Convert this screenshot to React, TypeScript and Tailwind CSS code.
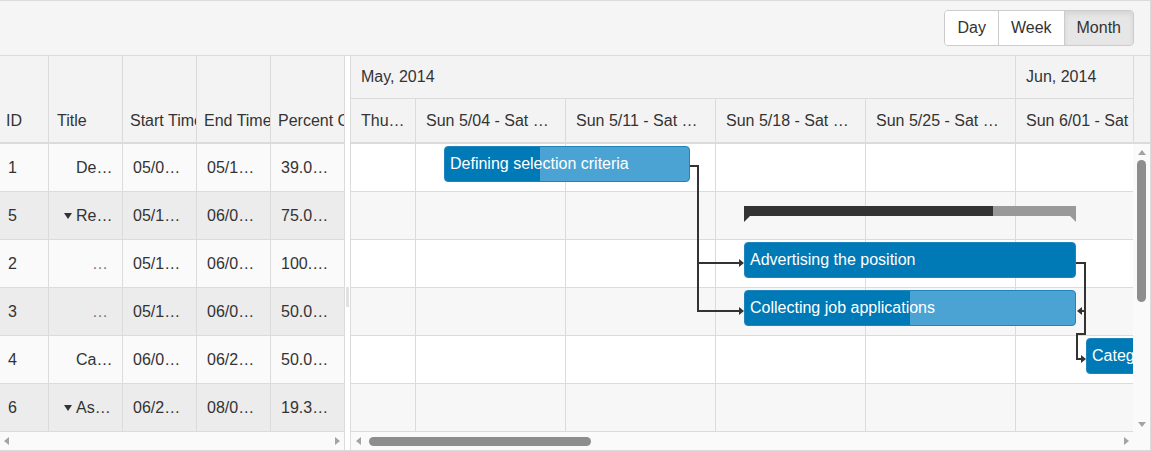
import React from 'react';

type Row = {
  id: string;
  title: string;
  level: number;
  caret: boolean;
  start: string;
  end: string;
  pct: string;
};

const rows: Row[] = [
  { id: '1', title: 'De…', level: 1, caret: false, start: '05/0…', end: '05/1…', pct: '39.0…' },
  { id: '5', title: 'Re…', level: 1, caret: true, start: '05/1…', end: '06/0…', pct: '75.0…' },
  { id: '2', title: '…', level: 2, caret: false, start: '05/1…', end: '06/0…', pct: '100.…' },
  { id: '3', title: '…', level: 2, caret: false, start: '05/1…', end: '06/0…', pct: '50.0…' },
  { id: '4', title: 'Ca…', level: 1, caret: false, start: '06/0…', end: '06/2…', pct: '50.0…' },
  { id: '6', title: 'As…', level: 1, caret: true, start: '06/2…', end: '08/0…', pct: '19.3…' },
];

const weeks = [
  { label: 'Thu…', w: 'w-[65px]' },
  { label: 'Sun 5/04 - Sat …', w: 'w-[150px]' },
  { label: 'Sun 5/11 - Sat …', w: 'w-[150px]' },
  { label: 'Sun 5/18 - Sat …', w: 'w-[150px]' },
  { label: 'Sun 5/25 - Sat …', w: 'w-[150px]' },
  { label: 'Sun 6/01 - Sat 6/07', w: 'w-[150px]' },
];

// bars, in px from the top-left of the timeline content
const tasks = [
  { title: 'Defining selection criteria', left: 93, top: 2, width: 246, done: 0.39 },
  { title: 'Advertising the position', left: 393, top: 98, width: 332, done: 1 },
  { title: 'Collecting job applications', left: 393, top: 146, width: 332, done: 0.5 },
  { title: 'Categorizing applications', left: 735, top: 194, width: 230, done: 0.5 },
];

const Caret = () => (
  <svg width="8" height="6" viewBox="0 0 8 6" className="mr-[4px] shrink-0">
    <polygon points="0,0 8,0 4,6" fill="#333" />
  </svg>
);

const Arrow = ({ dir }: { dir: 'up' | 'down' | 'left' | 'right' }) => {
  const pts = {
    up: '0,6 8,6 4,1',
    down: '0,1 8,1 4,6',
    left: '6,0 6,8 1,4',
    right: '2,0 2,8 7,4',
  }[dir];
  return (
    <svg width="8" height="8" viewBox="0 0 8 8">
      <polygon points={pts} fill="#a3a3a3" />
    </svg>
  );
};

const GridPane = () => (
  <div className="w-[345px] shrink-0 flex flex-col border-r border-[#dbdbdb]">
    <div className="h-[88px] flex border-b-2 border-[#dbdbdb] bg-[#f3f3f3]">
      <div className="w-[49px] border-r border-[#dbdbdb] flex items-end pb-[9px] pl-[6px]">ID</div>
      <div className="w-[74px] border-r border-[#dbdbdb] flex items-end pb-[9px] pl-[8px]">Title</div>
      <div className="w-[74px] border-r border-[#dbdbdb] flex items-end pb-[9px] pl-[7px] overflow-hidden whitespace-nowrap">Start Time</div>
      <div className="w-[74px] border-r border-[#dbdbdb] flex items-end pb-[9px] pl-[7px] overflow-hidden whitespace-nowrap">End Time</div>
      <div className="w-[73px] flex items-end pb-[9px] pl-[7px] overflow-hidden whitespace-nowrap">Percent Complete</div>
    </div>
    {rows.map((r, i) => (
      <div
        key={r.id}
        className={
          'h-[48px] flex border-b border-[#dbdbdb] ' + (i % 2 === 1 ? 'bg-[#ececec]' : 'bg-[#fafafa]')
        }
      >
        <div className="w-[49px] border-r border-[#dbdbdb] flex items-center pl-[8px]">{r.id}</div>
        <div
          className={
            'w-[74px] border-r border-[#dbdbdb] flex items-center ' +
            (r.level === 2 ? 'pl-[43px] text-[#777]' : r.caret ? 'pl-[15px]' : 'pl-[27px]')
          }
        >
          {r.caret && <Caret />}
          {r.title}
        </div>
        <div className="w-[74px] border-r border-[#dbdbdb] flex items-center pl-[10px]">{r.start}</div>
        <div className="w-[74px] border-r border-[#dbdbdb] flex items-center pl-[10px]">{r.end}</div>
        <div className="w-[73px] flex items-center pl-[10px]">{r.pct}</div>
      </div>
    ))}
    <div className="flex-1 flex items-center justify-between pl-[3px] bg-[#fafafa]">
      <Arrow dir="left" />
      <span className="mr-[3px]">
        <Arrow dir="right" />
      </span>
    </div>
  </div>
);

const Splitter = () => (
  <div className="w-[5px] shrink-0 bg-white flex flex-col">
    <div className="h-[88px]" />
    <div className="flex-1 flex items-center justify-center">
      <div className="w-[3px] h-[20px] bg-[#e1e1e1]" />
    </div>
  </div>
);

const Links = () => (
  <svg className="absolute left-0 top-[-1px]" width="800" height="288" fill="none">
    <g stroke="#333" strokeWidth="2">
      <path d="M339 23 H347 V168 H389" />
      <path d="M347 120 H389" />
      <path d="M725 120 H734 V191 H726 V216 H731" />
      <path d="M734 168 H730" />
    </g>
    <g fill="#333">
      <polygon points="388,164 393,168 388,172" />
      <polygon points="388,116 393,120 388,124" />
      <polygon points="730,212 735,216 730,220" />
      <polygon points="731,164 726,168 731,172" />
      <polygon points="393,73 399,73 393,79" />
    </g>
    <polygon points="725,73 719,73 725,79" fill="#999" />
  </svg>
);

const TimelinePane = () => (
  <div className="flex-1 flex flex-col border-l border-[#dbdbdb] min-w-0">
    <div className="h-[88px] flex border-b-2 border-[#dbdbdb] bg-[#f3f3f3]">
      <div className="w-[783px] shrink-0 border-r border-[#dbdbdb] flex flex-col overflow-hidden">
        <div className="h-[43px] flex border-b border-[#dbdbdb] whitespace-nowrap">
          <div className="w-[665px] shrink-0 border-r border-[#dbdbdb] flex items-center pl-[10px]">May, 2014</div>
          <div className="flex-1 flex items-center pl-[10px]">Jun, 2014</div>
        </div>
        <div className="flex-1 flex">
          {weeks.map((w, i) => (
            <div
              key={i}
              className={
                w.w +
                ' shrink-0 flex items-center px-[10px] whitespace-nowrap overflow-hidden ' +
                (i < weeks.length - 1 ? 'border-r border-[#dbdbdb]' : '')
              }
            >
              <span className={i < weeks.length - 1 ? 'truncate' : ''}>{w.label}</span>
            </div>
          ))}
        </div>
      </div>
      <div className="flex-1" />
    </div>

    <div className="h-[288px] flex">
      <div className="w-[782px] shrink-0 relative overflow-hidden">
        {rows.map((r, i) => (
          <div
            key={r.id}
            className={'h-[48px] flex border-b border-[#dbdbdb] ' + (i % 2 === 1 ? 'bg-[#f7f7f7]' : 'bg-white')}
          >
            {weeks.map((w, j) => (
              <div key={j} className={w.w + ' shrink-0 border-r border-[#dbdbdb]'} />
            ))}
          </div>
        ))}

        {/* summary bar */}
        <div className="absolute left-[393px] top-[62px] w-[332px] h-[10px] bg-[#999]">
          <div className="h-full w-[249px] bg-[#333]" />
        </div>

        {tasks.map((t) => (
          <div
            key={t.title}
            className="absolute h-[36px] rounded-[4px] bg-[#4ba3d4] border border-[#1f84bb] overflow-hidden text-white whitespace-nowrap"
            style={{ left: t.left, top: t.top, width: t.width }}
          >
            <div className="absolute left-0 top-0 h-full bg-[#0079b7]" style={{ width: `${t.done * 100}%` }} />
            <span className="relative pl-[5px] leading-[33px]">{t.title}</span>
          </div>
        ))}

        <Links />
      </div>
      <div className="flex-1 bg-[#fafafa] flex flex-col items-center pt-[5px] pb-[3px]">
        <Arrow dir="up" />
        <div className="w-[9px] h-[142px] mt-[3px] rounded-full bg-[#8d8d8d]" />
        <div className="flex-1" />
        <Arrow dir="down" />
      </div>
    </div>

    <div className="flex-1 flex items-center bg-[#fafafa] pl-[4px] pr-[20px]">
      <Arrow dir="left" />
      <div className="ml-[6px] w-[222px] h-[9px] rounded-full bg-[#8d8d8d]" />
      <div className="flex-1" />
      <Arrow dir="right" />
    </div>
  </div>
);

export default function App() {
  return (
    <div className="w-[1151px] h-[451px] border border-l-0 border-[#dbdbdb] bg-white flex flex-col text-[16px] text-[#333] font-['Liberation_Sans',Arial,sans-serif] overflow-hidden">
      <div className="h-[55px] shrink-0 border-b border-[#dbdbdb] bg-[#f5f5f5] flex items-center justify-end pr-[16px]">
        <div className="flex h-[36px] rounded-[4px] border border-[#cccccc] overflow-hidden">
          <button className="px-[12px] bg-white">Day</button>
          <button className="px-[12px] bg-white border-l border-[#cccccc]">Week</button>
          <button className="px-[12px] bg-[#e6e6e6] border-l border-[#cccccc] shadow-[inset_0_3px_5px_rgba(0,0,0,0.08)]">
            Month
          </button>
        </div>
      </div>
      <div className="flex-1 flex min-h-0">
        <GridPane />
        <Splitter />
        <TimelinePane />
      </div>
    </div>
  );
}
